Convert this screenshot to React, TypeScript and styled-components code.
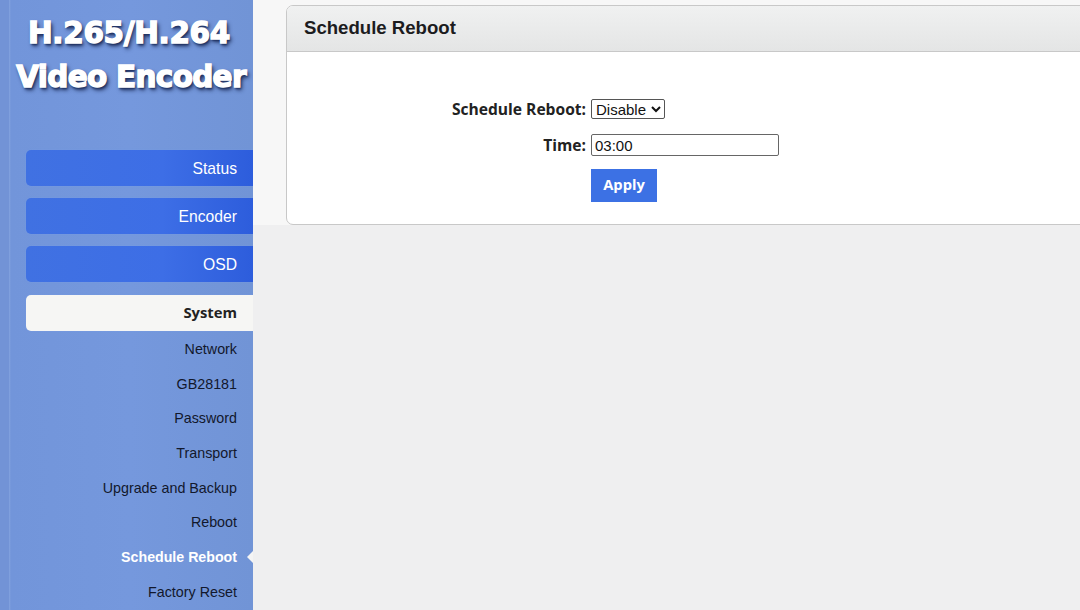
import React from "react";
import styled, { createGlobalStyle } from "styled-components";

const Global = createGlobalStyle`
  html, body { margin: 0; padding: 0; height: 100%; overflow: hidden; background: #efeff0; }
  * { box-sizing: border-box; }
`;

const Page = styled.div`
  display: flex;
  width: 1080px;
  height: 610px;
  overflow: hidden;
  font-family: "Liberation Sans", Arial, sans-serif;
`;

const Sidebar = styled.aside`
  width: 253px;
  flex: none;
  height: 610px;
  padding-left: 26px;
  background: linear-gradient(90deg, #7293d6 0, #7293d6 9px, #84a3de 9px, #7295da 11px, #7598dd 130px, #7194d6 253px);
  overflow: hidden;
`;

const Logo = styled.div`
  margin-left: -26px;
  height: 150px;
  padding: 11px 0 0 9px;
  text-align: center;
  font-family: "DejaVu Sans", sans-serif;
  font-weight: 700;
  font-size: 29.5px;
  line-height: 44px;
  color: #fff;
  -webkit-text-stroke: 1.4px #fff;
  text-shadow: 2px 3px 4px #1f2f5c, 1px 2px 2px #22366a;
  white-space: nowrap;
`;

const LogoLine = styled.div<{ $spacing: number; $shift: number }>`
  letter-spacing: ${(p) => p.$spacing}px;
  padding-right: ${(p) => p.$shift}px;
`;

const NavItem = styled.div`
  height: 36px;
  margin-bottom: 12px;
  padding: 1px 16px 0 0;
  display: flex;
  align-items: center;
  justify-content: flex-end;
  border-radius: 5px 0 0 5px;
  box-shadow: 0 0 2px rgba(120, 160, 235, 0.6);
  font-size: 15.7px;
  color: #fff;
  background: linear-gradient(90deg, #4071e2 0, #3d6ee6 60%, #2d5ddc 100%);
`;

const ActiveNav = styled(NavItem)`
  margin-top: 13px;
  margin-bottom: 0;
  padding: 0 16px 2px 0;
  background: #f6f6f4;
  color: #222;
  font-family: "Open Sans", sans-serif;
  font-weight: 700;
  font-size: 14.8px;
`;

const SubList = styled.ul`
  list-style: none;
  margin: 0;
  padding: 0.5px 0 0;
  display: flex;
  flex-direction: column;
`;

const SubItem = styled.li<{ $active?: boolean }>`
  position: relative;
  height: 34.7px;
  padding-right: 16px;
  display: flex;
  align-items: center;
  justify-content: flex-end;
  font-size: ${(p) => (p.$active ? "14.2px" : "14.3px")};
  font-weight: ${(p) => (p.$active ? 700 : 400)};
  color: ${(p) => (p.$active ? "#fff" : "#12182c")};
  ${(p) =>
    p.$active &&
    `&::after {
      content: "";
      position: absolute;
      right: 0;
      top: 50%;
      margin-top: -6px;
      border: 6px solid transparent;
      border-right-color: #f4f4f4;
      border-left-width: 0;
    }`}
`;

const Main = styled.main`
  flex: 1;
  min-width: 0;
  background: linear-gradient(180deg, #f7f7f7 0, #f7f7f7 225px, #efeff0 225px);
  padding: 5px 0 0 33px;
`;

const Panel = styled.section`
  width: 830px;
  height: 220px;
  background: #fff;
  border: 1px solid #c8c8c8;
  border-radius: 7px;
  overflow: hidden;
`;

const PanelHeader = styled.header`
  height: 46px;
  padding: 0 0 1px 17px;
  display: flex;
  align-items: center;
  background: linear-gradient(180deg, #f0f1f1, #e4e5e5);
  border-bottom: 1px solid #c8c8c8;
  font-size: 18.6px;
  font-weight: 700;
  color: #1c1c1e;
`;

const Form = styled.div`
  padding-top: 47px;
  display: grid;
  grid-template-columns: 299px auto;
  justify-content: start;
  row-gap: 13px;
  align-items: center;
`;

const Label = styled.label<{ $lift?: boolean }>`
  text-align: right;
  padding-bottom: ${(p) => (p.$lift ? "2px" : "0")};
  font-family: "Open Sans", sans-serif;
  font-weight: 700;
  font-size: 15.6px;
  line-height: 18px;
  color: #222;
`;

const Field = styled.div`
  padding-left: 5px;
`;

const SelectField = styled(Field)`
  padding-bottom: 2px;
`;

const Select = styled.select`
  display: block;
  height: 20px;
  width: 74px;
  padding: 0 0 2px;
  font-family: "Liberation Sans", Arial, sans-serif;
  font-size: 15px;
  color: #111;
  background: #fff;
  border: 1px solid #555;
  border-radius: 2px;
`;

const TextInput = styled.input`
  display: block;
  width: 188px;
  height: 22px;
  padding: 1px 3px;
  font-family: "Liberation Sans", Arial, sans-serif;
  font-size: 15px;
  color: #111;
  border: 1px solid #666;
  border-radius: 2px;
`;

const ApplyButton = styled.button`
  display: block;
  width: 66px;
  height: 33px;
  padding: 0 0 4px;
  border: 0;
  background: #3c71e4;
  color: #fff;
  font-family: "Open Sans", sans-serif;
  font-weight: 700;
  font-size: 14.7px;
`;

const subs = ["Network", "GB28181", "Password", "Transport", "Upgrade and Backup", "Reboot", "Schedule Reboot", "Factory Reset"];

export default function App() {
  return (
    <Page>
      <Global />
      <Sidebar>
        <Logo>
          <LogoLine $spacing={-0.34} $shift={4}>H.265/H.264</LogoLine>
          <LogoLine $spacing={-0.7} $shift={0}>Video Encoder</LogoLine>
        </Logo>
        <NavItem>Status</NavItem>
        <NavItem>Encoder</NavItem>
        <NavItem>OSD</NavItem>
        <ActiveNav>System</ActiveNav>
        <SubList>
          {subs.map((s) => (
            <SubItem key={s} $active={s === "Schedule Reboot"}>
              {s}
            </SubItem>
          ))}
        </SubList>
      </Sidebar>
      <Main>
        <Panel>
          <PanelHeader>Schedule Reboot</PanelHeader>
          <Form>
            <Label $lift>Schedule Reboot:</Label>
            <SelectField>
              <Select defaultValue="Disable">
                <option>Disable</option>
                <option>Enable</option>
              </Select>
            </SelectField>
            <Label>Time:</Label>
            <Field>
              <TextInput defaultValue="03:00" />
            </Field>
            <span />
            <Field>
              <ApplyButton>Apply</ApplyButton>
            </Field>
          </Form>
        </Panel>
      </Main>
    </Page>
  );
}
